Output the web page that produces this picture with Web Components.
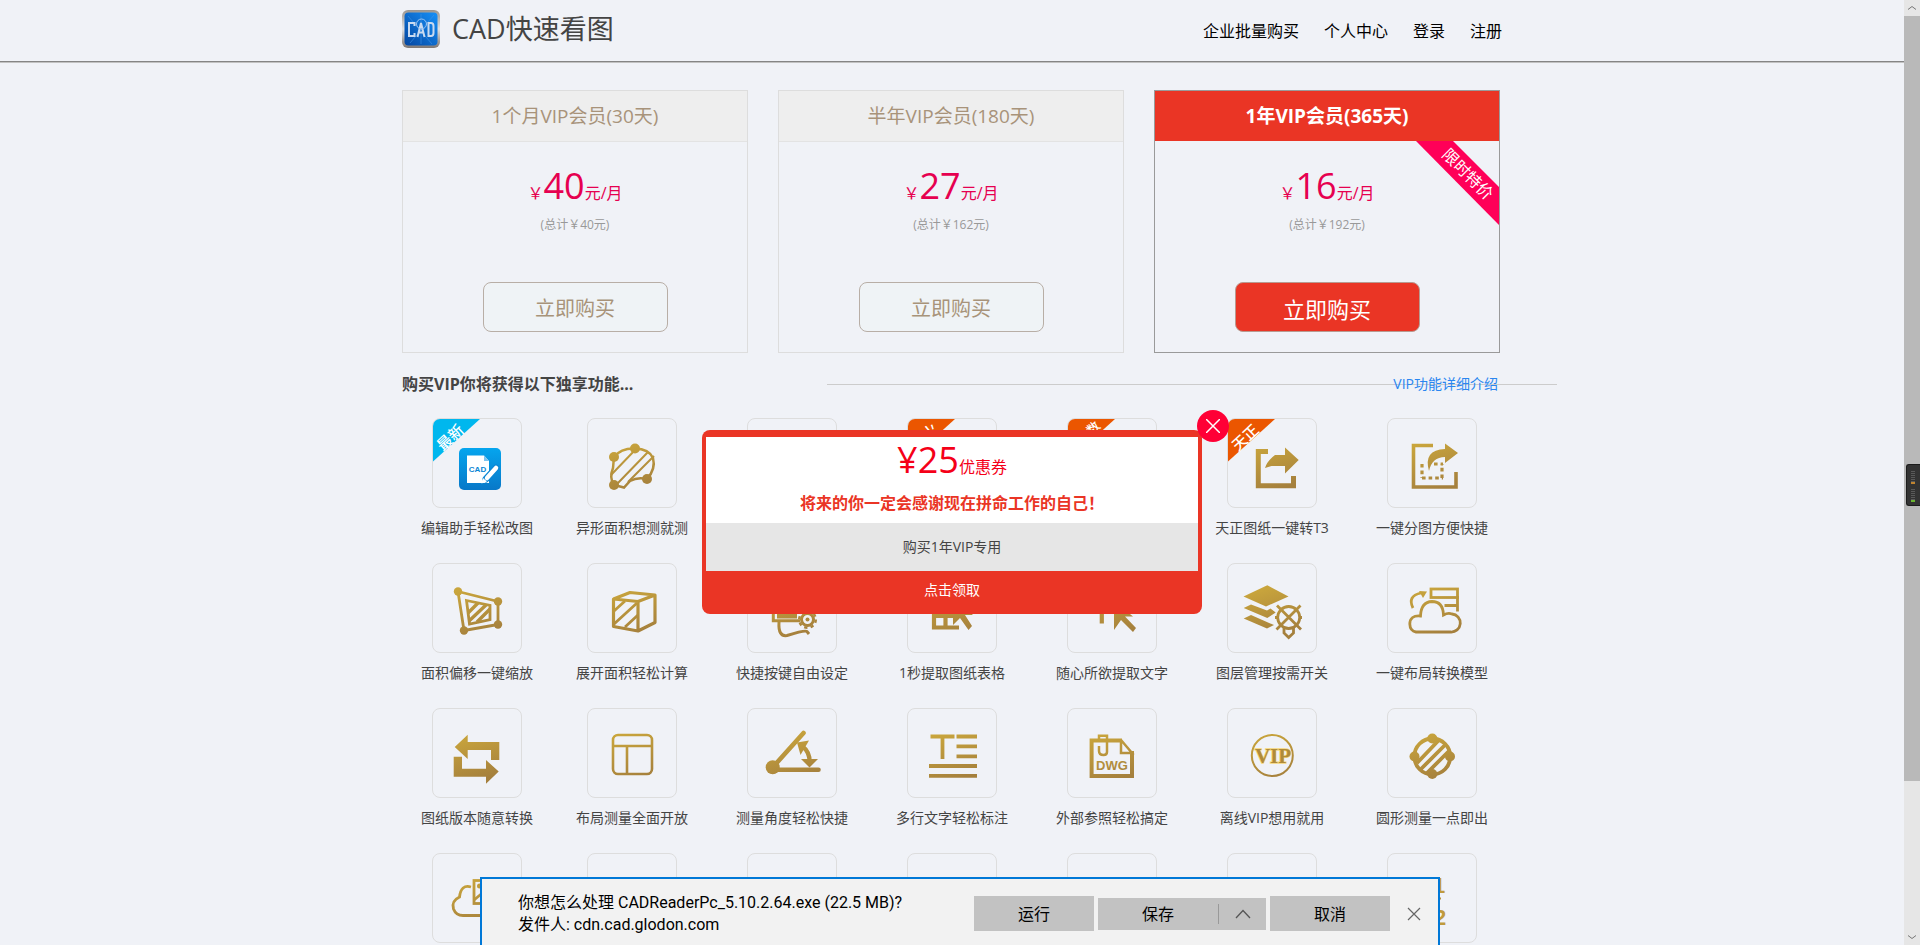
<!DOCTYPE html>
<html lang="zh-CN">
<head>
<meta charset="utf-8">
<title>CAD快速看图</title>
<style>
html,body{margin:0;height:100%;overflow:hidden}
body{background:#f0f2f7;color:#444;font:14px/20px "Open Sans","Noto Sans CJK SC",sans-serif}
</style>
</head>
<body>
<vip-app></vip-app>

<script>
const define = (name, html) => customElements.define(name, class extends HTMLElement {
  constructor() {
    super();
    this.attachShadow({ mode: 'open' });
  }
  connectedCallback() {
    if (this.shadowRoot.childNodes.length) return;
    const t = document.createElement('template');
    t.innerHTML = typeof html === 'function' ? html(this) : html;
    this.shadowRoot.append(t.content.cloneNode(true));
  }
});

/* Feature icons, drawn on a 90 x 90 tile. */
const G = 'stroke="url(#g)" fill="none"';
const cloud = 'M29 69H63.500A8.500 8.500 0 0 0 65 51Q61 49.500 56.500 52Q56 38.500 45 38.500Q34 39 33.500 53Q23 52 22.800 61Q23 68 29 69z';
const ribbon = (color, text, x, y, size) => `<path d="M0 1H48L0 44.500z" fill="${color}"/><text x="${x}" y="${y}" transform="rotate(-43 ${x} ${y})" text-anchor="middle" font-size="${size}" font-weight="500" fill="#fff" dominant-baseline="central">${text}</text>`;
const icons = {
  none: '',
  edit: `<rect x="27" y="30" width="42" height="42" rx="5" fill="url(#b)"/><path d="M35 37.500H52L57 43V65H35z" fill="#fff"/><path d="M52 37.500V43H57z" fill="#7cc4ef"/><text x="45.500" y="54" text-anchor="middle" font-size="8" font-weight="700" font-family="Liberation Sans" fill="#0b86d4">CAD</text><path d="M64 50L54 61" stroke="#0b86d4" stroke-width="7" stroke-linecap="round"/><path d="M64 50L55 60" stroke="#fff" stroke-width="4.500" stroke-linecap="round"/><path d="M51 60L55 63.500L49.500 65.500z" fill="#fff"/>${ribbon('#00b7ee', '最新', 18, 19, 15)}`,
  irregular: `<g ${G} stroke-width="2.500"><path d="M27 39Q34 30 48 30.500Q62 31 66 40Q69 51 60 61Q50 59 43 63L37 69.500L27 67Q22 60 26 50z"/><path d="M24 57L49 31M30 66L61 34M41 64L67 38" stroke-width="2"/></g><g fill="url(#g)"><circle cx="27" cy="39" r="5"/><circle cx="48" cy="30.500" r="5"/><circle cx="60" cy="61" r="5"/><circle cx="27" cy="67" r="5"/></g>`,
  t3: `<path d="M41 33.500H31.300V67.800H66.500V58" ${G} stroke-width="5"/><path d="M38 50Q40 43 48 37H58V29.500L71.700 42L58 55.500V48H44.500z" fill="url(#g)"/>${ribbon('#eb5600', '天正', 18, 19, 15)}`,
  hot: ribbon('#eb5600', '火', 23, 13, 15),
  param: ribbon('#eb5600', '数', 26, 10, 13),
  split: `<path d="M46 27.500H26.500V69H69V54" ${G} stroke-width="3.600"/><path d="M42 53Q36 32 58 31V25.500L71 35L58 45V39Q45 39 42 53z" fill="url(#g)"/><path d="M35 46V60M35 60H56M55 60V46M47 46H56" ${G} stroke-width="3.200" stroke-dasharray="3.600 3"/>`,
  offset: `<g ${G} stroke-width="2.800"><path d="M26 28.500L66 38.500V61.500L32 67.500z"/><path d="M34.500 37.500L58 42.500V56.500L37.500 61z"/><path d="M36 50L46 40M37 58L54 42M45 59L58 46" stroke-width="3.400"/></g><g fill="url(#g)"><circle cx="26" cy="28.500" r="4.200"/><circle cx="66" cy="38.500" r="4.200"/><circle cx="66" cy="61.500" r="4.200"/><circle cx="32" cy="67.500" r="4.200"/></g>`,
  cube: `<g ${G} stroke-width="3.200" stroke-linejoin="round"><path d="M26.500 36L51 38.500V68L26.500 63.500zL43 29.500L68 32L51 38.500M68 32V59.500L51 68"/><path d="M27 48L38 38M27 61L50 40M38 64L51 52" stroke-width="2.800"/></g>`,
  keys: `<g ${G} stroke-width="3"><path d="M53 57.800H26.300V32H64V46"/><path d="M30 53H50" stroke-width="5"/><path d="M32 59Q31 74 40 72.500Q58 67 60 68.500L62 71"/><circle cx="60.500" cy="56.500" r="6"/><circle cx="60.500" cy="56.500" r="8.300" stroke-width="2.500" stroke-dasharray="3.260 3.260"/></g><circle cx="60.500" cy="56.500" r="2" fill="url(#g)"/>`,
  table: `<path d="M52 64.500H27V30H64V45M27 41H64M27 53H46M38.500 41V64" ${G} stroke-width="4.200"/><path d="M46 62V34L66 52H58L65 63L61.500 67L53 55z" fill="url(#g)"/>`,
  pick: `<path d="M34.800 60.500V32M22 32H50" ${G} stroke-width="4.200"/><path d="M47 67V38L66 53.500H58L69 65L66 69L54 57z" fill="url(#g)"/>`,
  layers: `<g fill="url(#g)"><path d="M16.500 33.500L40.300 22.300L61.500 33.500L39 43.500z"/><path d="M16.700 45L24 41.500L40 47.500L43.500 45.500L48.700 49.500L40.300 55z"/><path d="M16.700 55.500L24 52L47 62L40 65.500z"/></g><g ${G} stroke-width="2.800"><circle cx="61.700" cy="54.500" r="11"/><path d="M50 42.500L74 66.500M73.500 42.500L49.500 66.500M48 54.500H51M72 54.500H75M57 65V70L61.700 74.500L66.500 70V65"/></g>`,
  model: `<g ${G} stroke-width="2.800"><path d="${cloud}"/><path d="M26 45Q20 33 34 30"/><rect x="44" y="26" width="26.500" height="8.500"/><path d="M70.500 33V48.500M57.500 42.500H70"/></g><path d="M32 28L40 28.500L36 35z" fill="url(#g)"/>`,
  version: `<g fill="url(#g)"><path d="M22.700 39L35.700 26.700V34H67.300V52H59V42H35.700V51z"/><path d="M21.700 48.700H30V60.700H54V52L66.700 63.500L54 75.700V68.700H21.700z"/></g>`,
  layout: `<g ${G} stroke-width="2.600"><rect x="26" y="27" width="39" height="39" rx="5"/><path d="M26 38H65M40 38V66"/></g>`,
  angle: `<g ${G} stroke-linecap="round"><path d="M26 59L56.500 25M26 61.800H71.500" stroke-width="4.600"/><path d="M55 38Q63 44 62.500 54" stroke-width="4.400" stroke-linecap="butt"/></g><g fill="url(#g)"><circle cx="25.700" cy="59.300" r="7"/><path d="M50 34.500L62 32.500L53.500 47z"/><path d="M54 51H71L62.500 59.500z"/></g>`,
  lines: `<path d="M23.500 28.500H47.500M35.500 28V51M49.500 28.500H70M49.500 38.300H70M49.500 48.300H70M22 58H70M22 67.800H70" ${G} stroke-width="3.800"/>`,
  dwg: `<path d="M54 32V45H65L54 32M32 31V27.800H40V44Q40 47 36.500 47Q32 47 32 43V38" ${G} stroke-width="2.500"/><path d="M55 32.500H24.600V68H65V43" ${G} stroke-width="4"/><text x="45" y="61.500" text-anchor="middle" font-family="Liberation Sans" font-size="13" font-weight="700" fill="url(#g)">DWG</text>`,
  vip: `<circle cx="45.300" cy="47.500" r="20.500" ${G} stroke-width="2"/><text x="46" y="54.500" text-anchor="middle" font-family="Liberation Serif" font-size="21" font-weight="700" fill="#b08a3a" stroke="#f5d676" stroke-width="1.500" paint-order="stroke">VIP</text>`,
  circle: `<g ${G} stroke-width="3.800"><circle cx="45.300" cy="48.500" r="18"/><path d="M30 55L52 32M34 61L58 37M39 66L63 42"/></g><g fill="url(#g)"><circle cx="45.300" cy="30.500" r="5"/><circle cx="45.300" cy="66" r="5"/><circle cx="27.500" cy="48.500" r="5"/><circle cx="63" cy="48.500" r="5"/></g>`,
  picture: `<g ${G} stroke-width="2.800"><path d="M39 34Q29 31 27.500 44Q19 48 21.500 56Q24 62.500 31 62.500H60"/><rect x="42" y="27.500" width="24" height="23"/><path d="M42 47L48 42L54 47"/></g><circle cx="47.500" cy="33" r="2.500" fill="url(#g)"/>`,
  half: `<g fill="#c09a3c" font-family="Liberation Sans" font-size="22" font-weight="700"><text x="46" y="39.500">1</text><text x="47" y="71.500">2</text></g><path d="M36 45.500H54" ${G} stroke-width="2"/>`
};

define('site-header', `
<style>
:host{display:block;border-bottom:1px solid #858585;box-shadow:0 1px 0 #c2c2c2}
.bar{max-width:1100px;height:61px;margin:0 auto;display:flex;justify-content:space-between}
.brand{display:flex;align-items:flex-start;gap:12px;padding-top:10px}
svg{width:38px;height:38px}
h1{margin:0;font-size:27px;line-height:38px;font-weight:400;color:#444}
nav{display:flex;gap:25px;padding-top:19px}
a{font-size:16px;line-height:24px;color:#000;text-decoration:none}
</style>
<div class="bar">
  <div class="brand">
    <svg viewBox="0 0 38 38" aria-hidden="true">
      <defs><linearGradient id="m" x1="0" y1="0" x2="0" y2="1"><stop offset="0" stop-color="#9b958f"/><stop offset=".5" stop-color="#e2e2e4"/><stop offset="1" stop-color="#7d7672"/></linearGradient>
      <linearGradient id="n" x1="0" y1="1" x2="1" y2="0"><stop offset="0" stop-color="#0546a0"/><stop offset="1" stop-color="#1690f8"/></linearGradient></defs>
      <rect width="38" height="38" rx="6" fill="url(#m)"/><rect x="2.500" y="2.500" width="33" height="33" rx="4" fill="url(#n)"/>
      <path d="M6 6L30 34M32 5L8 33M19 4V34" stroke="#3f93e6" stroke-width=".6"/>
      <g fill="none" stroke="#c9daf0" stroke-width="2"><path d="M12.500 16V13H7V26H12.500V23M15.500 27L19 13L22.500 27M16 22.500H22M26.500 13V26H29Q31.500 26 31.500 23V16Q31.500 13 29 13z"/><circle cx="19.500" cy="14" r="5" stroke-width="1" stroke="#9cc4f2"/></g>
    </svg>
    <h1>CAD快速看图</h1>
  </div>
  <nav><a href="#">企业批量购买</a><a href="#">个人中心</a><a href="#">登录</a><a href="#">注册</a></nav>
</div>`);

define('plan-card', el => `
<style>
:host{display:flex;flex-direction:column;box-sizing:border-box;height:263px;border:1px solid #ddd;position:relative;overflow:hidden;text-align:center}
:host([featured]){border-color:#9a9a9a}
h2{margin:0;font-size:19px;line-height:50px;font-weight:400;color:#a8937a;background:#eee;border-bottom:1px solid #e3e3e3}
:host([featured]) h2{background:#ea3525;border-color:#f0f2f7;color:#fff;font-weight:700}
.price{margin:22px 0 0;color:#e60050;font-size:16px;line-height:44px}
b{font-size:36px;font-weight:400}
.total{margin:0;color:#999;font-size:12px;line-height:20px}
button{font:20px/48px "Open Sans","Noto Sans CJK SC",sans-serif;width:185px;height:50px;padding:2px 0 0;margin:auto auto 20px;border:1px solid #b8aea6;border-radius:8px;background:#eff3f6;color:#a8937a}
:host([featured]) button{font-size:22px;background:#ea3525;border-color:#b99a90;color:#fff}
.flag{position:absolute;right:0;top:50px;width:83px;height:84px}
</style>
<h2><slot></slot></h2>
<p class="price">￥<b>${el.getAttribute('price')}</b>元/月</p>
<p class="total">(总计￥${el.getAttribute('total')}元)</p>
<button type="button">立即购买</button>
${el.hasAttribute('featured') ? `<svg class="flag" viewBox="0 0 83 84"><path d="M0 0H37L83 46V84z" fill="#ff0058"/><text x="52" y="33" transform="rotate(45 52 33)" text-anchor="middle" dominant-baseline="central" font-size="16" fill="#fff">限时特价</text></svg>` : ''}`);

define('section-heading', `
<style>
:host{display:flex;justify-content:space-between;align-items:center;position:relative;height:24px;padding-right:4px}
:host::before{content:"";position:absolute;left:425px;right:-55px;top:12px;border-top:1px solid #ccc}
h2{margin:0;font-size:16px;line-height:24px;font-weight:700;color:#444}
a{position:relative;font-size:14px;line-height:24px;color:#2a86f0;text-decoration:none}
</style>
<h2><slot></slot></h2><a href="#">VIP功能详细介绍</a>`);

define('feature-tile', el => `
<style>
:host{display:flex;flex-direction:column;align-items:center;height:145px}
.tile{box-sizing:border-box;width:90px;height:90px;border:1px solid #ddd;border-radius:8px;overflow:hidden}
svg{display:block;width:88px;height:88px}
.label{margin-top:10px;font-size:14px;line-height:20px;color:#444;white-space:nowrap}
</style>
<div class="tile"><svg viewBox="1 1 88 88" aria-hidden="true"><defs>
<linearGradient id="g" gradientUnits="userSpaceOnUse" x1="35" y1="25" x2="50" y2="72"><stop offset="0" stop-color="#c9a53c"/><stop offset="1" stop-color="#a5803d"/></linearGradient>
<linearGradient id="b" x1="0" y1="0" x2="0" y2="1"><stop offset="0" stop-color="#05a5ee"/><stop offset="1" stop-color="#0878c8"/></linearGradient></defs>
${icons[el.getAttribute('icon')]}</svg></div>
<span class="label"><slot></slot></span>`);

define('coupon-dialog', `
<style>
:host{display:block;position:absolute;z-index:2;left:50%;top:430px;width:500px;transform:translateX(-50%);box-sizing:border-box;padding:7px 4px 0;border-radius:8px;background:#ea3525;text-align:center}
.offer{background:#fff;height:86px}
p{margin:0}
.amount{color:#f50018;font-size:16px;line-height:46px}
b{font-size:36px;font-weight:400}
.slogan{color:#ea3525;font-size:16px;font-weight:700;line-height:26px}
.rule{background:#e6e6e6;color:#444;font-size:14px;line-height:48px}
.claim{display:block;width:100%;height:43px;border:0;padding:0 0 5px;background:none;color:#fff;font:14px/38px "Open Sans","Noto Sans CJK SC",sans-serif}
.close{position:absolute;right:-27px;top:-20px;width:32px;height:32px;border:0;border-radius:50%;padding:9px;background:#ff0036}
svg{display:block;width:14px;height:14px}
</style>
<div class="offer"><p class="amount"><b>¥25</b>优惠券</p><p class="slogan">将来的你一定会感谢现在拼命工作的自己！</p></div>
<p class="rule">购买1年VIP专用</p>
<button class="claim" type="button">点击领取</button>
<button class="close" type="button" aria-label="关闭"><svg viewBox="0 0 14 14"><path d="M0 0L14 14M14 0L0 14" stroke="#fff" stroke-width="1.500"/></svg></button>`);

define('download-bar', `
<style>
:host{display:flex;align-items:flex-start;box-sizing:border-box;position:absolute;z-index:3;left:50%;bottom:0;width:960px;height:68px;transform:translateX(-50%);padding:13px 14px 0 36px;border:2px solid #0078d7;border-bottom:0;background:#f2f2f2;color:#000}
.text{flex:1;margin:0;font-size:16px;line-height:22px;font-family:Roboto,"Noto Sans CJK SC",sans-serif}
.actions{display:flex;align-items:center;gap:4px;margin-top:4px}
button{border:0;padding:0;background:#c2c2c2;color:#000;font:16px/24px "Open Sans","Noto Sans CJK SC",sans-serif}
.main{width:120px;height:35px}
.split{display:flex;align-items:center;height:32px;background:#c2c2c2}
.split .save{width:120px;height:32px}
.split .more{width:48px;height:20px;border-left:1px solid #999}
.x{width:20px;height:35px;margin-left:10px;background:none}
svg{display:block;margin:auto}
</style>
<p class="text">你想怎么处理 CADReaderPc_5.10.2.64.exe (22.5 MB)?<br>发件人: cdn.cad.glodon.com</p>
<div class="actions">
<button class="main" type="button">运行</button>
<div class="split"><button class="save" type="button">保存</button><button class="more" type="button" aria-label="更多"><svg width="16" height="10" viewBox="0 0 16 10"><path d="M1 9L8 1.500L15 9" fill="none" stroke="#555" stroke-width="1.300"/></svg></button></div>
<button class="main" type="button">取消</button>
<button class="x" type="button" aria-label="关闭"><svg width="14" height="14" viewBox="0 0 14 14"><path d="M1 1L13 13M13 1L1 13" stroke="#666" stroke-width="1.200"/></svg></button>
</div>`);

define('page-scrollbar', `
<style>
:host{display:flex;flex-direction:column;width:16px;background:#e6e6e6}
button{height:16px;border:0;padding:0;background:none}
.thumb{flex:765;background:#b9b9b9}.track{flex:148}
svg{display:block;margin:auto}
</style>
<button type="button" aria-label="向上"><svg width="10" height="6" viewBox="0 0 10 6"><path d="M1 4.500L5 1.500L9 4.500" fill="none" stroke="#777"/></svg></button>
<div class="thumb"></div><div class="track"></div>
<button type="button" aria-label="向下"><svg width="10" height="6" viewBox="0 0 10 6"><path d="M1 1.500L5 4.500L9 1.500" fill="none" stroke="#777"/></svg></button>`);

define('usage-meter', `
<style>
:host{display:block;box-sizing:border-box;position:absolute;z-index:3;right:0;top:464px;width:14px;height:42px;border:1px solid #1c1c1c;border-right:0;border-radius:3px 0 0 3px;background:#333}
svg{display:block}
</style>
<svg width="13" height="40" viewBox="0 0 13 40"><path d="M4 6.500H8M4 8.500H8M4 10.500H8M4 12.500H8M4 14.500H8M4 16.500H8M4 24.500H8M4 26.500H8M4 28.500H8M4 30.500H8M4 32.500H8M4 34.500H8" stroke="#595959"/><path d="M4 18H8" stroke="#f0a030" stroke-width="1.500"/><path d="M4 36H8" stroke="#7ee030" stroke-width="1.500"/></svg>`);

const features = [
  ['edit', '编辑助手轻松改图'], ['irregular', '异形面积想测就测'], ['none', ''], ['hot', ''], ['param', ''], ['t3', '天正图纸一键转T3'], ['split', '一键分图方便快捷'],
  ['offset', '面积偏移一键缩放'], ['cube', '展开面积轻松计算'], ['keys', '快捷按键自由设定'], ['table', '1秒提取图纸表格'], ['pick', '随心所欲提取文字'], ['layers', '图层管理按需开关'], ['model', '一键布局转换模型'],
  ['version', '图纸版本随意转换'], ['layout', '布局测量全面开放'], ['angle', '测量角度轻松快捷'], ['lines', '多行文字轻松标注'], ['dwg', '外部参照轻松搞定'], ['vip', '离线VIP想用就用'], ['circle', '圆形测量一点即出'],
  ['picture', ''], ['none', ''], ['none', ''], ['none', ''], ['none', ''], ['none', ''], ['half', '']
];

define('vip-app', `
<style>
:host{display:flex;position:relative;height:100vh;overflow:hidden}
.page{flex:1;min-width:0;position:relative;overflow:hidden}
main{max-width:1100px;margin:0 auto;padding-top:28px}
.plans{display:grid;grid-template-columns:repeat(3,1fr);gap:30px;padding-right:2px}
section-heading{margin-top:19px}
.features{display:grid;grid-template-columns:150fr repeat(6,160fr);margin:22px -10px 0 0}
</style>
<div class="page">
  <site-header></site-header>
  <main>
    <div class="plans">
      <plan-card price="40" total="40">1个月VIP会员(30天)</plan-card>
      <plan-card price="27" total="162">半年VIP会员(180天)</plan-card>
      <plan-card price="16" total="192" featured>1年VIP会员(365天)</plan-card>
    </div>
    <section-heading>购买VIP你将获得以下独享功能...</section-heading>
    <div class="features">${features.map(([i, t]) => `<feature-tile icon="${i}">${t}</feature-tile>`).join('')}</div>
  </main>
  <coupon-dialog></coupon-dialog>
</div>
<page-scrollbar></page-scrollbar>
<usage-meter></usage-meter>
<download-bar></download-bar>`);
</script>
</body>
</html>
